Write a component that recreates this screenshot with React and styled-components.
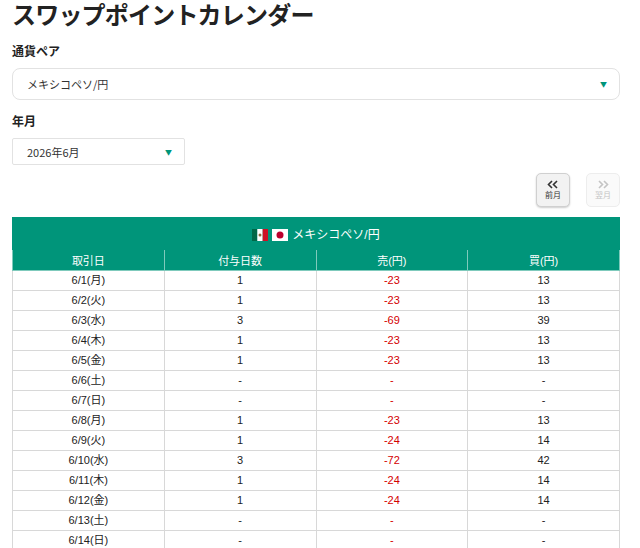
import React from 'react';
import styled, { createGlobalStyle } from 'styled-components';

const Global = createGlobalStyle`
  body { margin: 0; background: #fff; font-family: "Noto Sans CJK JP", "Liberation Sans", sans-serif; color: #222; }
`;

const Page = styled.div`
  padding: 0 20px 0 12px;
`;

const Title = styled.h1`
  margin: 0;
  font-size: 24px;
  line-height: 28px;
  font-weight: 700;
  letter-spacing: -0.8px;
`;

const Label = styled.div`
  font-size: 12px;
  font-weight: 700;
  margin: ${p => p.$top}px 0 8px;
  line-height: 18px;
`;

const Select = styled.div`
  display: flex;
  align-items: center;
  justify-content: space-between;
  box-sizing: border-box;
  width: ${p => p.$width || '100%'};
  height: ${p => p.$h}px;
  padding: 0 12px 0 14px;
  border: 1px solid #e2e2e2;
  border-radius: ${p => p.$r}px;
  font-size: 11px;
  color: #333;
`;

const Caret = styled.span`
  color: #00957a;
  font-size: 7px;
`;

const NavRow = styled.div`
  display: flex;
  justify-content: flex-end;
  gap: 16px;
  margin-top: 8px;
`;

const NavBtn = styled.div`
  width: 34px;
  height: 34px;
  box-sizing: border-box;
  border: 1px solid ${p => (p.$disabled ? '#ededed' : '#d0d0d0')};
  border-radius: 5px;
  background: ${p => (p.$disabled ? '#fafafa' : '#f2f2f2')};
  color: ${p => (p.$disabled ? '#c4c4c4' : '#333')};
  display: flex;
  flex-direction: column;
  align-items: center;
  justify-content: center;
  gap: 1px;
  font-size: 8px;
  line-height: 10px;
  box-shadow: ${p => (p.$disabled ? 'none' : '0 1px 2px rgba(0,0,0,0.2)')};
`;

const Table = styled.table`
  width: 100%;
  margin-top: 10px;
  border-collapse: collapse;
  font-size: 11px;
  font-family: "Liberation Sans", "Noto Sans CJK JP", sans-serif;
`;

const Caption = styled.th`
  background: #00957a;
  color: #fff;
  height: 31px;
  padding: 0;
  font-weight: 400;
  font-size: 12px;
  border: 1px solid #00957a;
`;

const Head = styled.th`
  background: #00957a;
  color: #fff;
  height: 20px;
  padding: 0;
  font-weight: 400;
  border: 1px solid #7fcabc;
  width: 25%;
`;

const Cell = styled.td`
  text-align: center;
  height: 19px;
  padding: 0;
  line-height: 19px;
  border: 1px solid #d8d8d8;
  color: ${p => (p.$red ? '#d40000' : '#222')};
`;

const Flag = styled.svg`
  vertical-align: -2px;
  margin-right: 4px;
`;

const Chevrons = ({ dir }) => (
  <svg width="12" height="9" viewBox="0 0 12 9" fill="none" stroke="currentColor" strokeWidth="1.6">
    {dir === 'left'
      ? <path d="M5 1 1.5 4.5 5 8M10 1 6.5 4.5 10 8" />
      : <path d="M2 1 5.5 4.5 2 8M7 1 10.5 4.5 7 8" />}
  </svg>
);

const rows = [
  ['6/1(月)', '1', '-23', '13'],
  ['6/2(火)', '1', '-23', '13'],
  ['6/3(水)', '3', '-69', '39'],
  ['6/4(木)', '1', '-23', '13'],
  ['6/5(金)', '1', '-23', '13'],
  ['6/6(土)', '-', '-', '-'],
  ['6/7(日)', '-', '-', '-'],
  ['6/8(月)', '1', '-23', '13'],
  ['6/9(火)', '1', '-24', '14'],
  ['6/10(水)', '3', '-72', '42'],
  ['6/11(木)', '1', '-24', '14'],
  ['6/12(金)', '1', '-24', '14'],
  ['6/13(土)', '-', '-', '-'],
  ['6/14(日)', '-', '-', '-'],
];

export default function App() {
  return (
    <Page>
      <Global />
      <Title>スワップポイントカレンダー</Title>
      <Label $top={14}>通貨ペア</Label>
      <Select $h={32} $r={8}>メキシコペソ/円<Caret>▼</Caret></Select>
      <Label $top={12}>年月</Label>
      <Select $h={27} $r={2} $width="173px">2026年6月<Caret>▼</Caret></Select>
      <NavRow>
        <NavBtn><Chevrons dir="left" />前月</NavBtn>
        <NavBtn $disabled><Chevrons dir="right" />翌月</NavBtn>
      </NavRow>
      <Table>
        <thead>
          <tr>
            <Caption colSpan={4}>
              <Flag width="16" height="12" viewBox="0 0 16 12">
                <rect width="5.3" height="12" fill="#006847" />
                <rect x="5.3" width="5.4" height="12" fill="#fff" />
                <rect x="10.7" width="5.3" height="12" fill="#ce1126" />
                <circle cx="8" cy="6" r="1.5" fill="#8a6a3a" />
              </Flag>
              <Flag width="16" height="12" viewBox="0 0 16 12">
                <rect width="16" height="12" fill="#fff" />
                <circle cx="8" cy="6" r="3.5" fill="#bc002d" />
              </Flag>
              メキシコペソ/円
            </Caption>
          </tr>
          <tr>
            <Head>取引日</Head><Head>付与日数</Head><Head>売(円)</Head><Head>買(円)</Head>
          </tr>
        </thead>
        <tbody>
          {rows.map(r => (
            <tr key={r[0]}>
              <Cell>{r[0]}</Cell><Cell>{r[1]}</Cell><Cell $red>{r[2]}</Cell><Cell>{r[3]}</Cell>
            </tr>
          ))}
        </tbody>
      </Table>
    </Page>
  );
}
